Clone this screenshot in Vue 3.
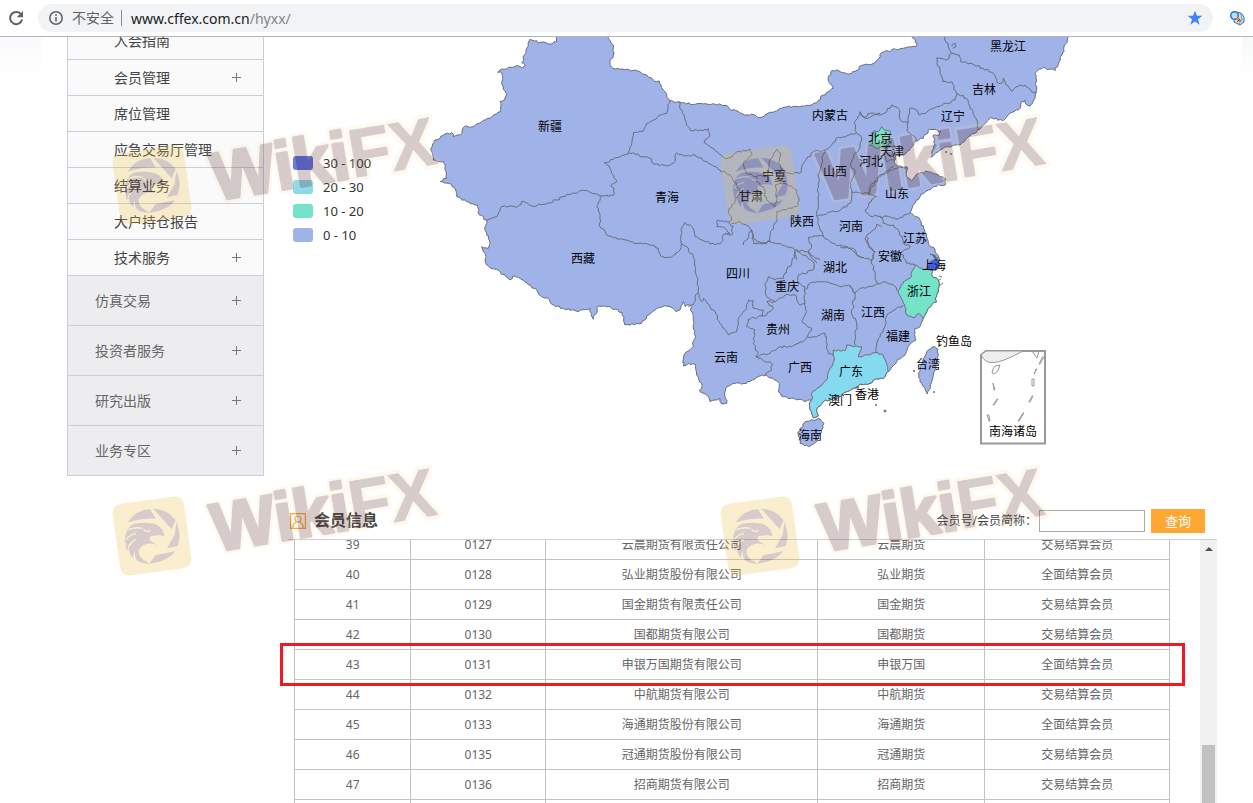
<script setup>
const subItems = [
  { name: '入会指南', more: false },
  { name: '会员管理', more: true },
  { name: '席位管理', more: false },
  { name: '应急交易厅管理', more: false },
  { name: '结算业务', more: false },
  { name: '大户持仓报告', more: false },
  { name: '技术服务', more: true },
]
const mainItems = ['仿真交易', '投资者服务', '研究出版', '业务专区']

const legend = [
  { label: '30 - 100', tone: 'top' },
  { label: '20 - 30', tone: 'high' },
  { label: '10 - 20', tone: 'mid' },
  { label: '0 - 10', tone: 'low' },
]

const rows = [
  ['39', '0127', '云晨期货有限责任公司', '云晨期货', '交易结算会员'],
  ['40', '0128', '弘业期货股份有限公司', '弘业期货', '全面结算会员'],
  ['41', '0129', '国金期货有限责任公司', '国金期货', '交易结算会员'],
  ['42', '0130', '国都期货有限公司', '国都期货', '交易结算会员'],
  ['43', '0131', '申银万国期货有限公司', '申银万国', '全面结算会员'],
  ['44', '0132', '中航期货有限公司', '中航期货', '交易结算会员'],
  ['45', '0133', '海通期货股份有限公司', '海通期货', '全面结算会员'],
  ['46', '0135', '冠通期货股份有限公司', '冠通期货', '交易结算会员'],
  ['47', '0136', '招商期货有限公司', '招商期货', '交易结算会员'],
  ['', '', '', '', ''],
]

// Map sheets: origin of each sheet on the map, points are in thirds of a unit.
const sheets = { nw: [420, 30], n: [680, 30], ne: [860, 30], sw: [670, 230], se: [840, 230] }

function pts(sheet, text) {
  const [ox, oy] = sheets[sheet]
  return text.trim().split(/\s+/).map((p) => {
    const [x, y] = p.split(',').map(Number)
    return [ox + x / 3, oy + y / 3]
  })
}

// Adds small bends between points so that borders look natural.
function toPath(points, closed = false) {
  const all = closed ? [...points, points[0]] : points
  let d = `M${all[0][0].toFixed(1)} ${all[0][1].toFixed(1)}`
  for (let i = 1; i < all.length; i++) {
    const [ax, ay] = all[i - 1]
    const [bx, by] = all[i]
    const n = Math.max(1, Math.round(Math.hypot(bx - ax, by - ay) / 2.4))
    for (let k = 1; k < n; k++) {
      const x = ax + ((bx - ax) * k) / n
      const y = ay + ((by - ay) * k) / n
      const h = Math.round(x * 3) * 12.9 + Math.round(y * 3) * 78.2
      d += `L${(x + Math.sin(h) * 0.9).toFixed(1)} ${(y + Math.cos(h * 1.7) * 0.9).toFixed(1)}`
    }
    d += `L${bx.toFixed(1)} ${by.toFixed(1)}`
  }
  return closed ? d + 'Z' : d
}

const land = toPath([
  ...pts('nw', `32,358 45,330 60,325 75,312 95,308 100,320 122,315 133,290 160,290 185,275 215,262 242,245 240,215 256,208 259,190 247,165 245,130 233,127 240,120 290,107 305,113 316,107 305,98 318,60 330,28 350,32 355,40 375,37 390,42 410,35 412,10 563,10 565,25 580,45 580,75 570,95 575,112 600,118 650,122 680,135 700,150 718,153 730,180 749,213 776,215`),
  ...pts('n', `40,224 70,222 100,221 140,226 150,239 175,244 195,256 225,255 235,263 270,247 320,231 380,226 410,218 430,195 445,185 460,175 445,152 452,125 470,119 500,131 515,130 525,124 545,106`),
  ...pts('ne', `10,105 35,103 55,88 65,68 95,60 130,55 168,50 172,40 160,25 150,8 624,8 622,30 605,75 585,122 550,112 525,130 530,150 528,188 525,205 510,228 500,225 495,210 485,215 480,235 450,250 430,272 392,262 380,275 360,298 330,318 300,345 260,350 235,365 212,382 215,365 225,345 220,315 238,316 243,305 225,298 205,300 190,325 170,332 155,350 130,375 105,380 103,400 120,408 142,412 140,440 155,452 175,430 205,425 240,440 257,447 255,465 235,463 205,480 180,500 165,520 150,548 165,560 180,570 195,610 205,635`),
  ...pts('se', `265,40 285,58 298,85 297,100 280,120 262,125 275,135 295,150 295,185 285,205 290,215 265,235 250,265 240,290 225,295 225,310 228,330 205,350 195,375 170,395 145,425 130,445 100,450 90,460 60,462 40,475 20,485 0,500`),
  ...pts('sw', `500,500 460,515 445,530 440,545 445,558 430,563 425,550 418,525 425,510 405,515 390,508 365,505 340,500 325,485 328,460 315,450 290,435 270,438 240,455 215,463 195,460 170,470 165,485 170,520 155,522 150,505 135,510 120,515 110,495 90,485 95,460 80,435 78,405 55,400 40,408 42,375 65,355 75,325 70,265 60,225 45,230 40,215 30,240 18,245 0,230`),
  ...pts('nw', `740,828 705,840 680,858 665,880 615,885 612,860 595,840 560,830 535,828 520,868 510,835 475,845 430,835 400,825 385,805 365,800 350,780 310,750 285,738 270,750 240,725 200,705 195,670 185,650 205,655 210,640 195,600 200,570 178,555 172,525 140,515 110,500 105,475 85,460 60,455 80,445 70,395 40,390`),
], true)

const borders = [
  ['nw', '200,570 230,560 245,530 270,528 290,532 312,514 335,528 370,523 410,510 440,493 495,482 530,492 545,497'],
  ['nw', '545,497 580,497 583,475 572,468 590,455 575,430 567,408 553,398 580,388 622,372'],
  ['nw', '622,372 635,345 640,308 668,305 680,280 712,262 740,250 743,225 750,213'],
  ['nw', '622,372 640,367 660,380 690,385 700,402 740,408 760,400 770,368 800,378 825,374 865,400 900,420 930,435 950,460 960,488 945,515 925,545 935,570 925,577'],
  ['nw', '776,215 795,270 812,302 840,300 865,296 870,315 852,338 880,355 915,385'],
  ['nw', '545,497 530,530 540,560 540,590 565,618 630,635 690,645 715,655 722,678 745,682 765,675 780,660 785,642'],
  ['nw', '785,642 783,600 795,577 815,590 825,620 860,635 885,645 905,635 910,615 930,610 915,595 890,590 893,570 925,577 940,590 935,615 915,610'],
  ['nw', '785,642 800,650 825,690 835,790 825,800 820,825 805,830'],
  ['sw', '85,190 95,215 100,205 120,230 135,245 150,280 175,315 200,305 208,260 230,235 235,210 250,212 250,235 280,240 278,258'],
  ['n', '135,385 150,382 165,370 210,357 215,375 190,400 200,430 230,440 245,437 265,438 270,390 290,358 302,370 295,400 315,425 300,460 285,465 290,500 285,530 260,510 250,470 230,455 230,440'],
  ['n', '302,415 330,430 360,430 370,400 400,365 435,360 425,400 415,440 415,500 410,558'],
  ['n', '300,460 320,462 350,480 358,510 350,530 290,545 290,575 275,600 270,635'],
  ['n', '155,580 180,575 215,600 220,625 245,643 270,635 300,640 345,660 380,665 420,690'],
  ['n', '345,660 350,690'],
  ['n', '435,360 455,345 475,322 500,318 530,308 522,280 540,245 555,265 600,250'],
  ['n', '530,308 545,325 540,355 525,370 512,400 525,430 510,460 515,485 510,520 480,540 410,558'],
  ['n', '515,485 550,490 568,492 590,500'],
  ['n', '568,492 575,470 600,440 640,410'],
  ['n', '410,558 420,600 430,618 385,622 395,650 385,670 410,700'],
  ['n', '430,618 455,640 510,655 530,675 550,683'],
  ['ne', '0,250 15,262 30,250 60,255 80,245 95,225 115,235 122,270 145,278 140,300 165,320 168,335'],
  ['ne', '145,278 150,235 170,240 178,255 230,230 260,220 285,210 290,190 275,155 248,155 240,120 228,85 260,90 275,70 265,50 250,15'],
  ['ne', '275,48 285,40 288,50 278,55'],
  ['ne', '275,70 298,75 302,95 330,100 370,115 400,130 410,155 425,160 430,145 455,185 470,170 495,165 515,185 530,188'],
  ['ne', '290,190 320,205 330,235 350,270 355,298'],
  ['ne', '142,412 110,415 60,435 30,470 25,495 45,500 15,540 30,558 60,560 90,560 115,567 150,548'],
  ['ne', '60,560 70,580 100,585 115,600 130,640 150,650 120,670 130,675 140,700 165,705'],
  ['ne', '65,590 50,583 40,600 15,625 30,650 45,665 35,690'],
  ['ne', '85,345 100,355 95,375 105,385 80,395 75,370 85,345'],
  ['se', '175,185 165,170 130,155 115,162 105,140 95,90 50,75 40,55 0,50'],
  ['se', '80,20 85,50 105,65 95,90'],
  ['se', '115,162 60,175 45,190 30,165'],
  ['se', '45,190 35,250 50,280 45,345'],
  ['se', '105,378 110,340 130,300 145,250 165,240 190,225'],
  ['sw', '380,62 365,100 350,120 340,145 315,150 295,140 285,165 290,200 315,215 345,195 375,195 390,225 405,220'],
  ['sw', '380,62 430,95 430,120 385,135 385,160 405,170 405,220 410,245 395,275 412,290 425,295 412,320'],
  ['sw', '278,258 300,245 310,235 290,215 315,215'],
  ['sw', '278,258 235,268 230,290 255,300 250,340 265,370 258,380 300,370 330,350 365,350 400,335 412,320 430,320 465,310 470,350 475,370 490,375'],
  ['sw', '258,380 305,400 305,420 285,435'],
  ['sw', '405,180 420,160 450,155 480,160 510,170 535,165 555,190'],
  ['sw', '220,45 245,0 250,40 290,40 300,30'],
].map(([s, t]) => toPath(pts(s, t)))

const regions = [
  { tone: 'high', d: toPath([
    ...pts('sw', '425,510 425,490 450,470 470,450 478,420 493,385 490,360 525,362 530,345 550,350 575,350 565,380 600,375'),
    ...pts('se', '105,368 130,375 145,425 130,445 100,450 90,460 60,462 40,475 20,485 0,500'),
    ...pts('sw', '500,500 460,515 445,530 440,545 445,558 430,563 425,550 418,525')], true) },
  { tone: 'mid', d: toPath(pts('se', '225,105 245,115 275,120 275,135 295,150 295,185 285,205 290,215 265,235 250,265 235,250 225,262 200,255 195,225 175,185 190,155 210,145'), true) },
  { tone: 'mid', d: toPath(pts('ne', '65,290 80,302 92,305 85,325 95,335 70,350 50,355 30,345 38,325 42,302 55,305'), true) },
  { tone: 'top', d: toPath(pts('se', '270,95 285,88 298,100 292,118 270,120 262,108'), true) },
  { tone: 'top', d: toPath(pts('se', '270,72 295,84 285,86'), true) },
  { tone: 'low', d: toPath(pts('se', '285,350 294,358 292,395 285,420 275,455 262,492 255,475 240,455 235,430 250,385 265,360'), true) },
  { tone: 'low', d: toPath(pts('sw', '450,567 462,580 455,600 440,635 415,650 390,640 385,605 405,575'), true) },
]

const labels = [
  ['新疆', 550, 126], ['青海', 667, 197], ['西藏', 583, 258], ['黑龙江', 1008, 46], ['内蒙古', 830, 115],
  ['吉林', 984, 89], ['辽宁', 953, 116], ['北京', 880, 138], ['天津', 892, 151], ['河北', 871, 161],
  ['山西', 835, 171], ['宁夏', 774, 176], ['甘肃', 751, 196], ['山东', 897, 193], ['陕西', 802, 221],
  ['河南', 851, 226], ['江苏', 915, 238], ['安徽', 890, 256], ['上海', 934, 265], ['湖北', 835, 267],
  ['四川', 738, 273], ['重庆', 787, 286], ['浙江', 919, 291], ['湖南', 833, 315], ['江西', 873, 312],
  ['贵州', 778, 329], ['福建', 898, 336], ['钓鱼岛', 954, 341], ['云南', 726, 357], ['广西', 800, 367],
  ['台湾', 928, 364], ['广东', 851, 371], ['澳门', 840, 400], ['香港', 867, 394], ['海南', 810, 435],
  ['南海诸岛', 1013, 431],
]

const marks = [[152, 185], [760, 185], [152, 536], [760, 536]]
</script>

<template>
  <div class="page">
    <header class="browser-bar">
      <button class="reload" type="button" aria-label="重新加载">
        <svg width="16" height="16" viewBox="0 0 16 16"><path d="M13.2 4.6A6.1 6.1 0 1 0 14.1 9.6" fill="none" stroke="#5f6368" stroke-width="2" /><path d="M15 1v6.300H8.700z" fill="#5f6368" /></svg>
      </button>
      <div class="address">
        <svg width="14" height="14" viewBox="0 0 14 14"><circle cx="7" cy="7" r="6.200" fill="none" stroke="#5f6368" stroke-width="1.500" /><path d="M7 6.200v4.300M7 3.300v1.600" stroke="#5f6368" stroke-width="1.600" /></svg>
        <span class="insecure">不安全</span>
        <span class="url">www.cffex.com.cn<span class="path">/hyxx/</span></span>
        <svg class="star" width="16" height="16" viewBox="0 0 16 16"><path d="M8 .8l2 5h5.400L11 9.200l1.600 5.500L8 11.500l-4.600 3.200L5 9.200.6 5.800H6z" fill="#4285f4" /></svg>
      </div>
      <button class="ext" type="button" aria-label="扩展程序">
        <svg width="16" height="16" viewBox="0 0 16 16"><path d="M6 2l6 1 3 4v5l-4 3-6-3z" fill="#c7e6f5" stroke="#3c64a8" /><path d="M12 4l1 6-3 4" fill="none" stroke="#6c93c8" /><circle cx="5.500" cy="5.500" r="3.800" fill="#b7e1fb" stroke="#2f6fd0" stroke-width="1.500" /><path d="M7.500 7.500l4 4" stroke="#e08a1c" stroke-width="2.600" /><path d="M8 12l3-3" stroke="#8a3c14" /></svg>
      </button>
    </header>

    <div class="body">
      <nav class="side">
        <ul>
          <li v-for="item in subItems" :key="item.name" class="sub">
            <a href="#">{{ item.name }}</a><span v-if="item.more" class="plus" />
          </li>
          <li v-for="name in mainItems" :key="name" class="main">
            <a href="#">{{ name }}</a><span class="plus" />
          </li>
        </ul>
      </nav>

      <main class="content">
        <section class="map-area">
          <ul class="legend">
            <li v-for="l in legend" :key="l.label"><i :class="['swatch', l.tone]" />{{ l.label }}</li>
          </ul>
          <svg class="map" viewBox="420 37 797 463" preserveAspectRatio="xMinYMin meet">
            <path :d="land" class="shape low" />
            <path v-for="(d, i) in borders" :key="i" :d="d" class="border" />
            <path v-for="(r, i) in regions" :key="'r' + i" :d="r.d" :class="['shape', r.tone]" />
            <g class="isle">
              <circle cx="946" cy="152" r=".6" /><circle cx="951" cy="154" r=".6" />
              <circle cx="914" cy="371" r=".7" /><circle cx="934" cy="392" r=".6" /><circle cx="876" cy="405" r=".6" /><circle cx="885" cy="411" r="1" />
              <path d="M938 281l3-2M939 286l4-3M939 276l3 1M855 388l3-2 1 2z" />
            </g>
            <g class="inset">
              <path d="M981 355v88.500h64v-92.500H986z" class="frame" />
              <path d="M981 355l5-4h37q-20 11-29 11.500q-9 1-13-7.500z" fill="#eee" />
              <path d="M1032 351l5 7 2-7M1044 357l-4 7h-1l4-8M993 369l2-3 5-1-2 6-4 3-2-1zM1034 374l2-5h1l-3 5zM993 383l2 7h-1zM1032 379h2v7h-2zM1029 402l3-6h1l-3 6zM993 405l4-6h1l-4 6zM987 415l2 6h1l-1-6zM1018 421l5-8h1l-5 8z" />
            </g>
            <text v-for="l in labels" :key="l[0]" :x="l[1]" :y="l[2] + 5">{{ l[0] }}</text>
          </svg>
        </section>

        <section class="members">
          <div class="members-head">
            <svg class="user" width="16" height="16" viewBox="0 0 16 16" fill="none" stroke="#f7a531" stroke-width="1.200"><path d="M.6.6h14.800v14.800H.6z" /><circle cx="8" cy="6" r="3" /><path d="M3 15.400V13q0-2.500 3.500-4M13 15.400V13q0-2.500-3.500-4" /></svg>
            <h2>会员信息</h2>
            <form class="search" @submit.prevent>
              <label for="member-key">会员号/会员简称：</label>
              <input id="member-key" type="text">
              <button type="submit">查询</button>
            </form>
          </div>
          <div class="list">
            <div class="table-wrap">
              <table>
                <colgroup><col class="c1"><col class="c2"><col class="c3"><col class="c4"><col></colgroup>
                <tbody>
                  <tr v-for="(r, i) in rows" :key="i"><td v-for="(c, j) in r" :key="j">{{ c }}</td></tr>
                </tbody>
              </table>
            </div>
            <div class="scroll"><i class="up" /><i class="thumb" /></div>
          </div>
          <div class="highlight" />
        </section>
      </main>
    </div>

    <svg class="watermarks" width="1253" height="803" viewBox="0 0 1253 803" aria-hidden="true">
      <g v-for="(m, i) in marks" :key="i" :transform="`translate(${m[0]} ${m[1]})`" opacity=".25">
        <rect x="-36" y="-36" width="72" height="72" rx="9" fill="#eebf40" transform="rotate(-8)" />
        <g transform="scale(.3333) translate(-456 -828)" fill="#633733">
          <path d="M383 788Q405 750 450 747L467 776Q425 774 383 788zM460 746Q500 746 527 780L515 808zM529 787Q546 822 533 858L501 865L524 825zM448 911L466 886L525 874Q505 904 448 911z" />
          <path d="M376 828Q384 796 402 791Q440 784 465 793Q490 801 493 829Q480 822 452 829Q444 836 452 843L472 855Q444 846 430 856Q410 868 418 885Q428 902 450 911Q420 912 409 898Q403 888 405 874Q398 882 400 894Q386 882 387 866L380 872Q375 856 378 846L374 850Z" />
          <path d="M385 809Q406 800 428 805M378 840Q388 824 408 820M384 866Q390 846 408 838M430 808Q438 818 452 812" fill="none" stroke="#eebf40" stroke-width="4" />
        </g>
        <g transform="rotate(-9.500)">
          <text x="60" y="26" class="halo">Wiki<tspan>FX</tspan></text>
          <text x="60" y="26" class="mark">Wiki<tspan>FX</tspan></text>
        </g>
      </g>
    </svg>
  </div>
</template>

<style>
body { margin: 0; overflow: hidden; }
</style>

<style scoped>
.page { position: relative; display: flex; flex-direction: column; height: 100vh; overflow: hidden; background: #fff; color: #666; font: 12px "Noto Sans", "Noto Sans CJK SC", sans-serif; }
ul { list-style: none; margin: 0; padding: 0; }
button { border: 0; padding: 0; background: none; font: inherit; }
.browser-bar { display: flex; align-items: center; height: 36px; border-bottom: 1px solid #b1b3b5; flex: none; background: #fff; }
.reload { width: 16px; height: 16px; margin: 0 14px 0 8px; }
.ext { width: 16px; height: 16px; margin: 0 8px 0 16px; }
.reload svg, .ext svg { display: block; }
.address { flex: 1; display: flex; align-items: center; height: 28px; padding: 0 10px 0 11px; border-radius: 14px; background: #f1f3f4; font-size: 14px; box-sizing: border-box; }
.insecure { margin-left: 9px; padding-right: 7px; border-right: 1px solid #8a8d91; line-height: 16px; color: #5f6368; }
.url { margin-left: 9px; flex: 1; color: #202124; }
.path { color: #80868b; }
.body { flex: 1; min-height: 0; display: flex; padding: 0 36px 0 67px; background: linear-gradient(#f9fafc, #fff 40px) left / 42px 100% no-repeat, linear-gradient(#f7f8f9, #fff 40px) right / 11px 100% no-repeat; }
.side { width: 197px; margin-right: 24px; overflow: hidden; flex: none; }
.side ul { margin-top: -14px; border: 1px solid #cdccda; border-top: 0; font-size: 14px; }
.side li { display: flex; align-items: center; justify-content: space-between; box-sizing: border-box; padding-right: 22px; }
.side li + li { border-top: 1px solid #cdccda; }
.sub { height: 36px; padding-left: 46px; background: #fafafb; }
.main { height: 50px; padding-left: 27px; background: #ededf0; }
.side a { padding-bottom: 2px; color: #444; text-decoration: none; }
.main a { color: #666; }
.plus { width: 9px; height: 9px; background: linear-gradient(#777, #777) center / 9px 1px no-repeat, linear-gradient(#777, #777) center / 1px 9px no-repeat; }
.content { flex: 1; min-width: 0; display: flex; flex-direction: column; }
.map-area { display: flex; height: 463px; flex: none; }
.legend { width: 132px; flex: none; padding: 114px 0 0 5px; box-sizing: border-box; color: #333; font-size: 13px; }
.legend li { display: flex; align-items: center; height: 24px; gap: 10px; }
.swatch { width: 20px; height: 14px; border-radius: 3px; }
.swatch.top { background: #5470e8; }
.swatch.high { background: #86daef; }
.swatch.mid { background: #75e2ca; }
.swatch.low { background: #9fb3e9; }
.map { flex: 1; min-width: 0; height: 463px; font-size: 12px; }
.map text { text-anchor: middle; fill: #000; }
.shape { stroke: #6a6e78; stroke-width: 1; }
.shape.top { fill: #3d5fe8; }
.shape.high { fill: #86daef; }
.shape.mid { fill: #75e2ca; }
.shape.low { fill: #9fb3e9; }
.border { fill: none; stroke: #6a6e78; stroke-width: 1; }
.isle { fill: #555; stroke: #777; stroke-width: 1; }
.inset { fill: none; stroke: #999; stroke-width: 1; }
.frame { stroke-width: 2; }
.members { position: relative; flex: 1; min-height: 0; display: flex; flex-direction: column; }
.members-head { display: flex; align-items: center; height: 39px; flex: none; padding: 0 12px 0 2px; border-bottom: 1px solid #cdccda; }
.user { margin-top: 3px; }
h2 { margin: 0 0 0 8px; font-size: 16px; line-height: 24px; color: #444; }
.search { margin-left: auto; display: flex; align-items: center; padding-top: 3px; color: #444; }
.search label { margin-right: 2px; line-height: 24px; }
.search input { width: 106px; height: 22px; box-sizing: border-box; margin-right: 6px; border: 1px solid #a9a9a9; background: none; }
.search button { width: 54px; height: 24px; background: #ffa733; color: #fff; font-size: 13px; line-height: 24px; }
.list { flex: 1; min-height: 0; display: flex; }
.table-wrap { flex: 1; min-width: 0; overflow: hidden; padding: 0 30px 0 6px; }
table { width: 100%; margin-top: -11px; border-collapse: collapse; table-layout: fixed; text-align: center; }
td { height: 29px; padding: 0; border: 1px solid #c3c3c3; line-height: 18px; }
.c1 { width: 13.300%; }
.c2 { width: 15.400%; }
.c3 { width: 31.100%; }
.c4 { width: 19.100%; }
.scroll { width: 17px; flex: none; background: #f1f1f1; display: flex; flex-direction: column; align-items: center; justify-content: space-between; }
.up { margin-top: 7px; border: 4px solid transparent; border-top: 0; border-bottom-color: #505050; }
.thumb { width: 13px; height: 58px; background: #c1c1c1; }
.highlight { position: absolute; left: -8px; right: 32px; top: 143px; height: 43px; box-sizing: border-box; border: 3px solid #ed1c24; }
.watermarks { position: absolute; left: 0; top: 0; pointer-events: none; }
.watermarks text { font: bold 68px "Liberation Sans", sans-serif; stroke-linejoin: round; }
.halo { fill: #f8db9b; stroke: #f8db9b; stroke-width: 8; stroke-opacity: .6; }
.mark { fill: #633733; stroke: #633733; stroke-width: 3; }
.mark tspan { stroke-width: 1; }
</style>
